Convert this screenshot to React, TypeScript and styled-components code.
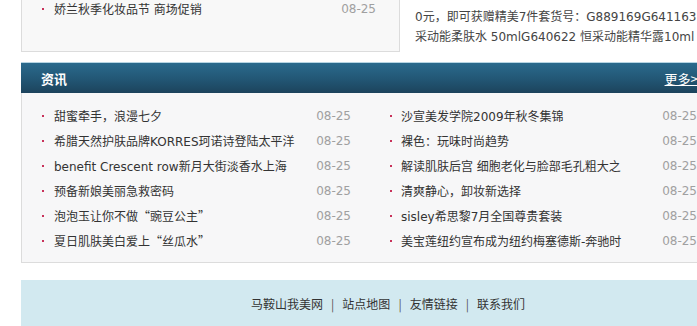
import styled, { createGlobalStyle } from 'styled-components';

const GlobalStyle = createGlobalStyle`
  html, body {
    margin: 0;
    padding: 0;
    overflow: hidden;
    background: #fff;
  }
  body {
    font-family: "DejaVu Sans", "Noto Sans CJK SC", sans-serif;
    font-size: 12px;
    color: #333;
  }
`;

const Page = styled.div`
  width: 734px;
  padding-left: 21px;
`;

const TopRow = styled.div`
  display: flex;
  align-items: flex-start;
`;

const PromoBox = styled.div`
  flex-shrink: 0;
  width: 379px;
  box-sizing: border-box;
  background: #f8f8f8;
  border: 1px solid #dcdcdc;
  border-top: none;
  padding: 0 23px 34px 20px;
`;

const PromoText = styled.div`
  margin-left: 15px;
  padding-top: 7px;
  line-height: 20px;
  color: #444;
  white-space: nowrap;
`;

const HeaderBar = styled.div`
  margin-top: 10px;
  height: 30px;
  border-top: 1px solid #b7d5e3;
  background: linear-gradient(to bottom, #2a6a8d 0%, #225674 55%, #1c435c 100%);
  display: flex;
  align-items: center;
  padding: 0 50px 0 20px;
`;

const HeaderTitle = styled.span`
  color: #fff;
  font-weight: bold;
  font-family: "Noto Sans CJK SC", sans-serif;
  font-size: 13px;
`;

const MoreLink = styled.a`
  margin-left: auto;
  color: #fff;
  text-decoration: underline;
  font-family: "Noto Sans CJK SC", sans-serif;
  font-size: 13px;
`;

const NewsPanel = styled.div`
  background: #f7f7f8;
  border: 1px solid #dcdcdc;
  border-top: none;
  padding: 10px 0 9px 15px;
  display: grid;
  grid-template-columns: 348px 348px;
`;

const Column = styled.div<{ $padRight: number }>`
  padding-right: ${(p) => p.$padRight}px;
`;

const Row = styled.div<{ $h?: number; $indent?: number }>`
  height: ${(p) => p.$h ?? 25}px;
  display: flex;
  align-items: center;
  padding-left: ${(p) => p.$indent ?? 5}px;
`;

const Bullet = styled.span<{ $gap: number }>`
  width: 2px;
  height: 2px;
  background: #c8325a;
  margin-right: ${(p) => p.$gap}px;
  flex-shrink: 0;
`;

const Title = styled.span`
  flex: 1;
  white-space: nowrap;
  overflow: hidden;
  color: #333;
`;

const Quote = styled.span`
  font-family: "Noto Sans CJK SC", sans-serif;
`;

const DateText = styled.span`
  color: #a0a0a0;
  flex-shrink: 0;
`;

const Footer = styled.div`
  margin-top: 17px;
  background: #d2e9f0;
  padding: 16px 0;
  line-height: 16px;
  text-align: center;
  color: #333;
  font-family: "Noto Sans CJK SC", sans-serif;
`;

const FooterLink = styled.a`
  color: #333;
  text-decoration: none;
`;

const Sep = styled.span`
  margin: 0 8px;
  color: #555;
`;

const leftNews = [
  '甜蜜牵手，浪漫七夕',
  '希腊天然护肤品牌KORRES珂诺诗登陆太平洋',
  'benefit Crescent row新月大街淡香水上海',
  '预备新娘美丽急救密码',
  '泡泡玉让你不做“豌豆公主”',
  '夏日肌肤美白爱上“丝瓜水”',
];

const rightNews = [
  '沙宣美发学院2009年秋冬集锦',
  '裸色：玩味时尚趋势',
  '解读肌肤后宫 细胞老化与脸部毛孔粗大之',
  '清爽静心，卸妆新选择',
  'sisley希思黎7月全国尊贵套装',
  '美宝莲纽约宣布成为纽约梅塞德斯-奔驰时',
];

const footerLinks = ['马鞍山我美网', '站点地图', '友情链接', '联系我们'];

// curly quotes get the CJK font so they come out full width
const renderTitle = (t: string) =>
  t.split(/([“”])/).map((part, i) =>
    part === '“' || part === '”' ? <Quote key={i}>{part}</Quote> : part,
  );

export default function App() {
  return (
    <>
      <GlobalStyle />
      <Page>
        <TopRow>
          <PromoBox>
            <Row $h={17} $indent={0}>
              <Bullet $gap={10} />
              <Title>娇兰秋季化妆品节 商场促销</Title>
              <DateText>08-25</DateText>
            </Row>
          </PromoBox>
          <PromoText>
            <div>0元，即可获赠精美7件套货号：G889169G641163</div>
            <div>采动能柔肤水 50mlG640622 恒采动能精华露10ml</div>
          </PromoText>
        </TopRow>

        <HeaderBar>
          <HeaderTitle>资讯</HeaderTitle>
          <MoreLink>更多&gt;&gt;</MoreLink>
        </HeaderBar>

        <NewsPanel>
          <Column $padRight={34}>
            {leftNews.map((t) => (
              <Row key={t}>
                <Bullet $gap={10} />
                <Title>{renderTitle(t)}</Title>
                <DateText>08-25</DateText>
              </Row>
            ))}
          </Column>
          <Column $padRight={36}>
            {rightNews.map((t) => (
              <Row key={t}>
                <Bullet $gap={9} />
                <Title>{renderTitle(t)}</Title>
                <DateText>08-25</DateText>
              </Row>
            ))}
          </Column>
        </NewsPanel>

        <Footer>
          {footerLinks.map((l, i) => (
            <span key={l}>
              {i > 0 && <Sep>|</Sep>}
              <FooterLink>{l}</FooterLink>
            </span>
          ))}
        </Footer>
      </Page>
    </>
  );
}
